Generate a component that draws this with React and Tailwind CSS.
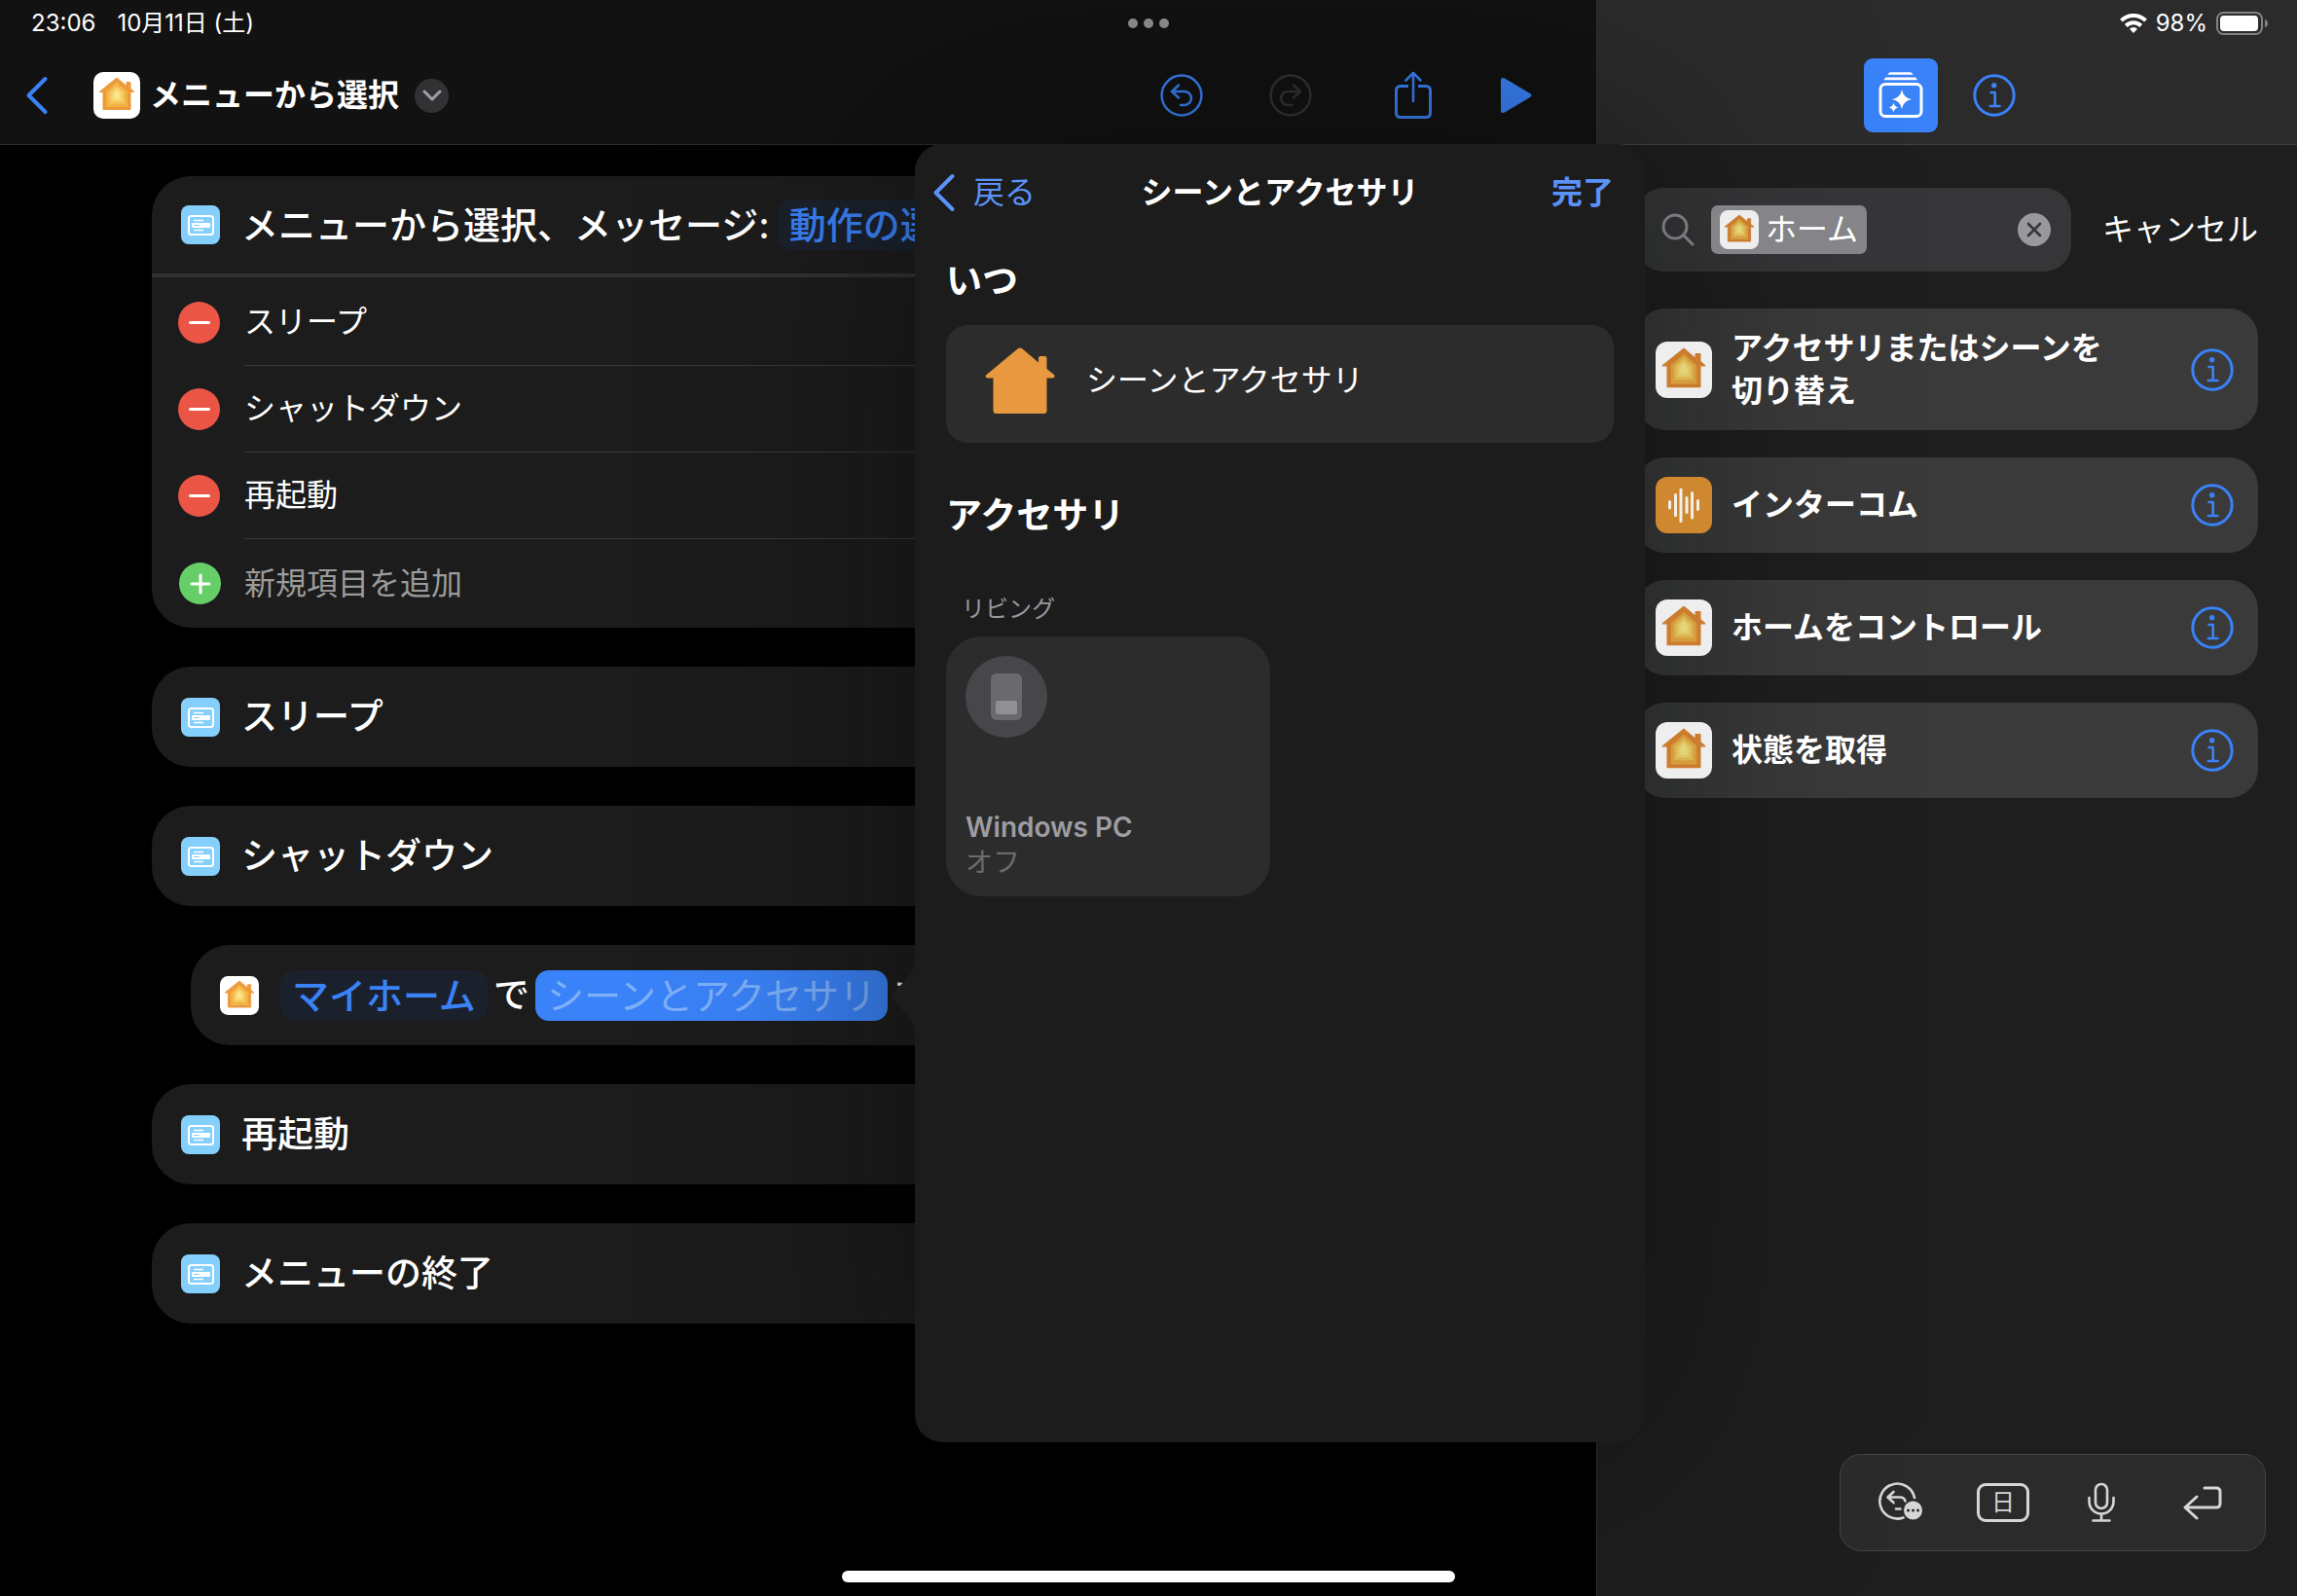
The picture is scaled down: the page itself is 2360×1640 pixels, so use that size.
import React from "react";

function HomeIcon({ className = "", dim = false }) {
  const c = dim
    ? ["#eeeeee", "#cb7c2e", "#d69d3d", "#dcb452", "#e0c767", "#e3d679"]
    : ["#ffffff", "#ed9a3a", "#f2b244", "#f5c45a", "#f8d66f", "#fbe588"];
  return (
    <svg viewBox="0 0 48 48" className={className} aria-hidden="true">
      <rect width="48" height="48" rx="10" fill={c[0]} />
      <path d="M24 6 L6 20.5 H10 V38.5 H38 V20.5 H42 L38 17 V10.5 H34 V14.5Z" fill={c[1]} stroke={c[1]} strokeWidth="1" strokeLinejoin="round" />
      <path d="M24 10.5 L13 20 V36 H35 V20Z" fill={c[2]} />
      <path d="M24 13.5 L16 20.5 V32.5 H32 V20.5Z" fill={c[3]} />
      <path d="M24 16 L18.5 21.5 V30 H29.5 V21.5Z" fill={c[4]} />
      <path d="M24 18.5 L21 22 V27.5 H27 V22Z" fill={c[5]} />
    </svg>
  );
}

function HomeGlyph() {
  return (
    <svg viewBox="0 0 72 68" className="h-[68px] w-[72px] shrink-0 text-[#e8983e]" fill="currentColor" aria-hidden="true">
      <path d="M33.500 1.500 Q36 -0.500 38.500 1.500 L55 15.500 V11 Q55 9 57 9 H61.500 Q63.500 9 63.500 11 V22 L71 28 Q73 31 69 31.500 H63.500 V65 Q63.500 68 60.500 68 H11.500 Q8.500 68 8.500 65 V31.500 H3 Q-1 31 1.500 28Z" />
    </svg>
  );
}

function MenuIcon() {
  return (
    <svg viewBox="0 0 40 40" className="size-10 shrink-0" aria-hidden="true">
      <rect width="40" height="40" rx="8" fill="#84cffb" />
      <rect x="8" y="11" width="25" height="19" rx="2.500" fill="none" stroke="#fff" strokeWidth="2" />
      <path d="M13 15.500 H23 M13 25.500 H23" stroke="#fff" strokeWidth="1.300" />
      <rect x="11" y="18" width="19" height="5" rx="1" fill="#fff" />
      <path d="M13 20.500 H19" stroke="#84cffb" strokeWidth="1" />
    </svg>
  );
}

function BackChevron() {
  return (
    <svg viewBox="0 0 24 40" className="h-10 w-6" fill="none" stroke="currentColor" strokeWidth="4" strokeLinecap="round" strokeLinejoin="round" aria-hidden="true">
      <path d="M20.500 3 L3.500 20 L20.500 37" />
    </svg>
  );
}

function TurnIcon({ flip = false }) {
  return (
    <svg viewBox="0 0 44 44" className={flip ? "size-11 -scale-x-100" : "size-11"} fill="none" stroke="currentColor" strokeWidth="2.500" strokeLinecap="round" strokeLinejoin="round" aria-hidden="true">
      <circle cx="22" cy="22" r="20.400" />
      <path d="M19 11.500 L12 18 L19 24.500 M12.500 18 H25 A7 7 0 0 1 25 32 H21" />
    </svg>
  );
}

function InfoIcon() {
  return (
    <svg viewBox="0 0 44 44" className="size-11" fill="none" stroke="currentColor" strokeWidth="3" strokeLinecap="round" strokeLinejoin="round" aria-hidden="true">
      <circle cx="22" cy="22" r="20.200" />
      <circle cx="21.700" cy="11.800" r="2.700" fill="currentColor" stroke="none" />
      <path d="M18.500 19 H22.700 V33 M17.800 33 H27.500" strokeWidth="2.600" />
    </svg>
  );
}

function LibraryIcon() {
  return (
    <svg viewBox="0 0 48 50" className="h-[50px] w-12" fill="none" stroke="#fff" aria-hidden="true">
      <path d="M13 1.200 H34 Q35.500 1.200 36.500 3.800 H10.500 Q11.500 1.200 13 1.200Z M9 6.500 H38.500 Q40 6.500 41 9.200 H6.500 Q7.500 6.500 9 6.500Z" fill="#fff" stroke="none" />
      <rect x="3" y="13.500" width="42" height="33" rx="5" strokeWidth="3" />
      <path d="M25 19 Q26.500 27.500 35 29 Q26.500 30.500 25 39 Q23.500 30.500 15 29 Q23.500 27.500 25 19Z" fill="#fff" stroke="none" />
      <path d="M16.500 32.500 Q17.300 36.700 21.500 37.500 Q17.300 38.300 16.500 42.500 Q15.700 38.300 11.500 37.500 Q15.700 36.700 16.500 32.500Z" fill="#fff" stroke="none" />
    </svg>
  );
}

function Card({ children, indent = false }) {
  return (
    <section className={(indent ? "ml-10 gap-6 " : "gap-[22px] ") + "flex h-[103px] items-center rounded-l-[40px] bg-[#1c1c1c] pl-[30px] text-[37px] font-medium"}>
      {children}
    </section>
  );
}

function Token({ children, active = false }) {
  return (
    <button
      className={
        (active ? "bg-[#3a82f7] font-normal text-[#7fb0f9] " : "bg-[#1b212c] text-[#3a82f7] ") +
        "h-[52px] rounded-[14px] px-3 text-[38px] leading-[52px] whitespace-nowrap"
      }
    >
      {children}
    </button>
  );
}

function MenuRow({ label }) {
  return (
    <li className="flex items-center pl-[27px]">
      <button aria-label={label + "を削除"} className="flex size-[43px] shrink-0 items-center justify-center rounded-full bg-[#ea5545]">
        <span className="h-[3px] w-[22px] rounded-full bg-white" />
      </button>
      <span className="ml-[25px] flex h-[89px] grow items-center border-b border-[#3a3a3b] text-[32px]">{label}</span>
    </li>
  );
}

function ActionCard({ icon, children, tall = false }) {
  return (
    <li className={(tall ? "h-[125px]" : "h-[98px]") + " flex items-center rounded-[30px] bg-[#3a3a3b] pr-[25px] pl-5"}>
      <span className="relative z-20 shrink-0">{icon}</span>
      <span className="relative z-20 ml-5 grow text-[32px] leading-[44px] font-bold">{children}</span>
      <button aria-label="情報" className="text-[#3a82f7]">
        <InfoIcon />
      </button>
    </li>
  );
}

function IntercomIcon() {
  return (
    <svg viewBox="0 0 58 58" className="size-[58px]" stroke="#f3efe8" strokeWidth="3" strokeLinecap="round" aria-hidden="true">
      <rect width="58" height="58" rx="12" fill="#cf882f" stroke="none" />
      <path d="M14.500 25.500 V32 M20.500 18.500 V39.500 M26 13 V45.500 M32 21.500 V36.500 M37.500 16.500 V42 M43.500 24.500 V33.500" />
    </svg>
  );
}

export default function App() {
  return (
    <div className="relative grid min-h-screen grid-cols-[41fr_18fr] overflow-hidden bg-black font-['Inter','Noto_Sans_CJK_JP',sans-serif] text-white" lang="ja">
      {/* Editor */}
      <div className="relative z-10 flex min-w-0 flex-col">
        <header className="grid h-[149px] grid-rows-[48px_100px] border-b border-[#2b2b2b] bg-[#121212]">
          <div className="grid grid-cols-[1fr_auto] items-center pl-8 text-[24px]">
            <div className="flex gap-[22px]">
              <time>23:06</time>
              <span>10月11日 (土)</span>
            </div>
            <button aria-label="マルチタスク" className="mr-[439px] flex gap-[6px]">
              <span className="size-[10px] rounded-full bg-[#929292]" />
              <span className="size-[10px] rounded-full bg-[#929292]" />
              <span className="size-[10px] rounded-full bg-[#929292]" />
            </button>
          </div>
          <div className="flex items-center pr-[66px] pl-[26px]">
            <button aria-label="戻る" className="text-[#3a82f7]">
              <BackChevron />
            </button>
            <HomeIcon className="ml-[46px] size-12" />
            <h1 className="ml-[10px] text-[32px] font-bold">メニューから選択</h1>
            <button aria-label="名称オプション" className="ml-4 flex size-[35px] items-center justify-center rounded-full bg-[#323235] text-[#a0a0a5]">
              <svg viewBox="0 0 20 12" className="h-3 w-5" fill="none" stroke="currentColor" strokeWidth="3" strokeLinecap="round" strokeLinejoin="round">
                <path d="M2 2 L10 10 L18 2" />
              </svg>
            </button>
            <div className="ml-auto flex items-center text-[#3a82f7]">
              <button aria-label="取り消す">
                <TurnIcon />
              </button>
              <button aria-label="やり直す" disabled className="ml-[68px] text-[#333333]">
                <TurnIcon flip />
              </button>
              <button aria-label="共有" className="ml-[84px]">
                <svg viewBox="0 0 40 50" className="h-[50px] w-10" fill="none" stroke="currentColor" strokeWidth="3" strokeLinecap="round" strokeLinejoin="round">
                  <path d="M15 15.500 H7 Q2.500 15.500 2.500 20 V43 Q2.500 47.500 7 47.500 H33 Q37.500 47.500 37.500 43 V20 Q37.500 15.500 33 15.500 H25" strokeLinecap="butt" />
                  <path d="M20 31 V2.500 M12.500 9.500 L20 2 L27.500 9.500" strokeWidth="2.600" />
                </svg>
              </button>
              <button aria-label="実行" className="ml-[70px]">
                <svg viewBox="0 0 32 36" className="h-9 w-8" fill="currentColor">
                  <path d="M0 2 Q0 -1 4 0.600 L30 16 Q33 18 30 20 L4 35.400 Q0 37 0 34Z" />
                </svg>
              </button>
            </div>
          </div>
        </header>

        <main className="flex flex-col gap-10 pt-8 pl-[156px]">
          <section className="rounded-l-[40px] bg-[#1c1c1c]">
            <div className="flex h-[104px] items-center border-b-4 border-[#323234] pl-[30px] text-[38px] font-medium">
              <MenuIcon />
              <h2 className="mr-2 ml-[22px] whitespace-nowrap">メニューから選択、メッセージ:</h2>
              <Token>動作の選択</Token>
            </div>
            <ul className="pt-[2px]">
              <MenuRow label="スリープ" />
              <MenuRow label="シャットダウン" />
              <MenuRow label="再起動" />
            </ul>
            <button className="flex h-[91px] items-center pl-7 text-[32px] text-[#9b9b9b]">
              <span className="flex size-[43px] items-center justify-center rounded-full bg-[#67ce67]">
                <svg viewBox="0 0 22 22" className="size-[22px]" stroke="#fff" strokeWidth="3" strokeLinecap="round">
                  <path d="M11 2 V20 M2 11 H20" />
                </svg>
              </span>
              <span className="ml-6">新規項目を追加</span>
            </button>
          </section>
          <Card>
            <MenuIcon />
            スリープ
          </Card>
          <Card>
            <MenuIcon />
            シャットダウン
          </Card>
          <Card indent>
            <HomeIcon className="size-10 shrink-0" />
            <div className="-ml-[2px] flex items-center gap-[6px] whitespace-nowrap">
              <Token>マイホーム</Token>
              <span>で</span>
              <Token active>シーンとアクセサリ</Token>
              <span>を</span>
            </div>
          </Card>
          <Card>
            <MenuIcon />
            再起動
          </Card>
          <Card>
            <MenuIcon />
            メニューの終了
          </Card>
        </main>

        {/* Popover */}
        <div role="dialog" aria-label="シーンとアクセサリ" className="absolute top-[148px] bottom-[158px] left-[940px] w-[750px] rounded-[28px] bg-[#1c1c1c] shadow-[0_0_240px_rgba(0,6,0,0.5)]">
          <svg viewBox="0 0 26 76" className="absolute top-[838px] right-full h-[76px] w-[26px] text-[#1c1c1c]" fill="currentColor" aria-hidden="true">
            <path d="M26 0 Q26 10 20 17 L4 34 Q0 38 4 42 L20 59 Q26 66 26 76Z" />
          </svg>
          <div className="grid h-[100px] grid-cols-[1fr_auto_1fr] items-center px-[18px] text-[32px] text-[#5b92f8]">
            <button className="flex items-center gap-[18px] justify-self-start">
              <BackChevron />
              戻る
            </button>
            <h2 className="font-bold text-white">シーンとアクセサリ</h2>
            <button className="mr-[14px] justify-self-end font-bold">完了</button>
          </div>
          <div className="px-8">
            <h3 className="mt-[14px] text-[37px] leading-[54px] font-bold">いつ</h3>
            <button className="mt-[18px] flex h-[121px] w-full items-center gap-8 rounded-[22px] bg-[#2c2c2c] pb-2 pl-10 text-[32px]">
              <HomeGlyph />
              シーンとアクセサリ
            </button>
            <h3 className="mt-12 text-[37px] leading-[54px] font-bold">アクセサリ</h3>
            <h4 className="mt-[51px] pl-4 text-[24px] leading-9 text-[#98989d]">リビング</h4>
            <button className="mt-[10px] flex h-[267px] w-[333px] flex-col items-start justify-start rounded-[36px] bg-[#2c2c2c] px-5 pt-5 text-left text-[28px]">
              <span className="flex size-[84px] shrink-0 items-center justify-center rounded-full bg-[#47474b]">
                <span className="flex h-12 w-8 flex-col justify-end rounded-[6px] bg-[#6a6a6e] px-[5px] pb-[6px]">
                  <span className="h-[14px] rounded-[2px] bg-[#8f8f94]" />
                </span>
              </span>
              <span className="mt-[74px] leading-9 font-semibold text-[#9d9da3]">Windows PC</span>
              <span className="leading-9 text-[#6b6b6e]">オフ</span>
            </button>
          </div>
        </div>
      </div>

      {/* Action library */}
      <aside className="flex min-w-0 flex-col border-l border-[#333333] bg-[#1e1e1e]">
        <header className="grid h-[149px] grid-rows-[48px_100px] border-b border-[#404040] bg-[#2b2b2b]">
          <div className="flex items-center justify-end gap-[9px] pr-[29px] text-[24px]">
            <svg viewBox="0 0 28 20" className="h-5 w-7" fill="none" stroke="#fff" strokeWidth="4" aria-label="Wi-Fi">
              <path d="M1.500 7.200 A17.500 17.500 0 0 1 26.500 7.200 M6.300 12.500 A11 11 0 0 1 21.700 12.500" />
              <path d="M14 20 L10 15.800 A5.500 5.500 0 0 1 18 15.800Z" fill="#fff" stroke="none" />
            </svg>
            <span>98%</span>
            <svg viewBox="0 0 54 24" className="h-6 w-[54px]" aria-label="バッテリー">
              <rect x="1" y="1" width="46" height="22" rx="6.500" fill="none" stroke="#828282" strokeWidth="2" />
              <rect x="4" y="4" width="39" height="16" rx="4" fill="#fff" />
              <path d="M50 8 Q53 9 53 12 Q53 15 50 16Z" fill="#828282" />
            </svg>
          </div>
          <div className="flex items-center justify-center gap-9 pr-4 text-[#3a82f7]">
            <button aria-label="アクションライブラリ" aria-pressed="true" className="flex size-[76px] items-center justify-center rounded-[9px] bg-[#3a82f7]">
              <LibraryIcon />
            </button>
            <button aria-label="情報">
              <InfoIcon />
            </button>
          </div>
        </header>

        <div className="flex items-center gap-8 px-10 pt-11 text-[32px]">
          <label className="flex h-[86px] min-w-0 grow items-center rounded-[28px] bg-[#363638] pr-[21px] pl-[26px]">
            <svg viewBox="0 0 34 34" className="size-[34px] shrink-0" fill="none" stroke="#8e8e93" strokeWidth="3" strokeLinecap="round" aria-label="検索">
              <circle cx="14" cy="14" r="12" />
              <path d="M23 23 L32 32" />
            </svg>
            <span className="relative z-20 ml-[17px] flex h-[50px] shrink-0 items-center gap-[7px] rounded-[7px] bg-[#858589] px-[9px]">
              <HomeIcon dim className="size-10" />
              ホーム
            </span>
            <input aria-label="アクションを検索" className="w-0 min-w-0 grow bg-transparent outline-none" />
            <button aria-label="消去" className="flex size-[34px] shrink-0 items-center justify-center rounded-full bg-[#98989d] text-[#363638]">
              <svg viewBox="0 0 16 16" className="size-4" fill="none" stroke="currentColor" strokeWidth="2.600" strokeLinecap="round">
                <path d="M2 2 L14 14 M14 2 L2 14" />
              </svg>
            </button>
          </label>
          <button className="shrink-0">キャンセル</button>
        </div>

        <ul className="mt-[38px] flex flex-col gap-7 px-10">
          <ActionCard tall icon={<HomeIcon dim className="size-[58px]" />}>
            アクセサリまたはシーンを
            <br />
            切り替え
          </ActionCard>
          <ActionCard icon={<IntercomIcon />}>インターコム</ActionCard>
          <ActionCard icon={<HomeIcon dim className="size-[58px]" />}>ホームをコントロール</ActionCard>
          <ActionCard icon={<HomeIcon dim className="size-[58px]" />}>状態を取得</ActionCard>
        </ul>

        {/* Keyboard shortcut bar */}
        <div className="mt-auto mr-8 mb-[46px] flex h-[100px] w-[438px] items-center self-end rounded-[22px] border border-[#444444] bg-[#2b2b2b] pr-11 pl-[39px] text-[#d6d6d6]">
          <button aria-label="編集メニュー">
            <svg viewBox="0 0 46 44" className="h-11 w-[46px]" fill="none" stroke="currentColor" strokeWidth="2.600" strokeLinecap="round" strokeLinejoin="round">
              <path d="M25.500 37.500 A18 18 0 1 1 37 17" />
              <path d="M15.500 11 L9.500 16.500 L15.500 22 M10 16.500 H22 Q26.500 16.500 27.500 20.500 M18 28.500 H22.500" />
              <circle cx="35.500" cy="30" r="9.500" fill="currentColor" stroke="none" />
              <path d="M30.500 30 H30.510 M35.500 30 H35.510 M40.500 30 H40.510" stroke="#2b2b2b" strokeWidth="3" />
            </svg>
          </button>
          <button aria-label="入力言語" className="ml-[55px] flex h-10 w-[54px] items-center justify-center rounded-[9px] border-3 border-current text-[24px] leading-none">
            日
          </button>
          <button aria-label="音声入力" className="ml-[60px]">
            <svg viewBox="0 0 28 42" className="h-[42px] w-7" fill="none" stroke="currentColor" strokeWidth="2.600" strokeLinecap="round">
              <rect x="8" y="2" width="12" height="25" rx="6" />
              <path d="M1.500 16 V20 A12.500 12.500 0 0 0 26.500 20 V16 M14 33 V39.500 M5.500 39.500 H22.500" />
            </svg>
          </button>
          <button aria-label="改行" className="ml-auto">
            <svg viewBox="0 0 40 36" className="h-9 w-10" fill="none" stroke="currentColor" strokeWidth="3" strokeLinecap="round" strokeLinejoin="round">
              <path d="M22 3 H34 Q38 3 38 7 V19 Q38 23 34 23 H3 M14 12 L2 23 L14 34" />
            </svg>
          </button>
        </div>
      </aside>

      {/* Home indicator */}
      <div className="absolute bottom-[14px] left-1/2 z-20 h-3 w-[630px] -translate-x-1/2 rounded-full bg-white" />
    </div>
  );
}
